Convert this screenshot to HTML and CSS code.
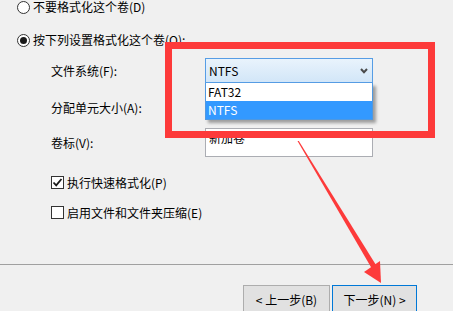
FILE: index.html
```html
<!DOCTYPE html>
<html lang="zh-CN">
<head>
<meta charset="utf-8">
<link rel="stylesheet" href="styles.css">
</head>
<body>
<div class="dialog">
  <div class="content">
    <div class="radio-row">
      <span class="radio"></span><span>不要格式化这个卷(D)</span>
    </div>
    <div class="radio-row second">
      <span class="radio checked"></span><span>按下列设置格式化这个卷(O):</span>
    </div>
    <div class="field fs">
      <span class="label">文件系统(F):</span>
      <div class="select">
        <span>NTFS</span>
        <svg class="chev" width="8" height="6" viewBox="0 0 8 6"><path d="M1 1 L4 4.2 L7 1" fill="none" stroke="#4a4a4a" stroke-width="2"/></svg>
        <div class="list">
          <div class="opt">FAT32</div>
          <div class="opt sel">NTFS</div>
        </div>
      </div>
    </div>
    <div class="field unit">
      <span class="label">分配单元大小(A):</span>
      <div class="select under"></div>
    </div>
    <div class="field vol">
      <span class="label">卷标(V):</span>
      <div class="input">新加卷</div>
    </div>
    <div class="check-row first">
      <span class="checkbox"><svg width="11" height="11" viewBox="0 0 11 11"><path d="M1.5 5.5 L4.2 8.3 L9.5 2" fill="none" stroke="#1a1a1a" stroke-width="1.8"/></svg></span>
      <span>执行快速格式化(P)</span>
    </div>
    <div class="check-row">
      <span class="checkbox"></span>
      <span>启用文件和文件夹压缩(E)</span>
    </div>
  </div>
  <div class="footer">
    <button class="btn back">&lt; 上一步(B)</button>
    <button class="btn next">下一步(N) &gt;</button>
  </div>
</div>
<svg class="annot" width="453" height="311" viewBox="0 0 453 311">
  <rect x="168.5" y="45.5" width="263" height="89" fill="none" stroke="#fd3a3a" stroke-width="7"/>
  <polygon points="297.5,141 298.8,141 376,265 371.5,268" fill="#fd3a3a"/>
  <polygon points="364,272 381,283 380,261" fill="#fd3a3a"/>
</svg>
</body>
</html>
```
FILE: styles.css
```css
html, body {
  margin: 0;
  padding: 0;
}
body {
  width: 453px;
  height: 311px;
  overflow: hidden;
  background: #f0f0f0;
  font-family: "Noto Sans CJK SC", "Noto Sans", sans-serif;
  font-size: 12px;
  color: #000;
  position: relative;
}
.dialog {
  display: flex;
  flex-direction: column;
}
.content {
  padding-left: 17px;
}
.radio-row {
  display: flex;
  align-items: center;
  gap: 3px;
  height: 14px;
  line-height: 14px;
}
.radio-row.second {
  margin-top: 19px;
}
.radio {
  width: 13px;
  height: 13px;
  box-sizing: border-box;
  border: 1px solid #333;
  border-radius: 50%;
  background: #fff;
  display: flex;
  align-items: center;
  justify-content: center;
}
.radio.checked::after {
  content: "";
  width: 7px;
  height: 7px;
  border-radius: 50%;
  background: #1a1a1a;
}
.field {
  display: flex;
  align-items: center;
  margin-left: 34px;
}
.label {
  width: 154px;
  flex: none;
}
.field.fs {
  margin-top: 11px;
  height: 25px;
}
.field.unit {
  margin-top: 12px;
  height: 24px;
}
.field.vol {
  margin-top: 9px;
  height: 29px;
}
.select {
  position: relative;
  width: 168px;
  height: 25px;
  box-sizing: border-box;
  border: 1px solid #569de5;
  background: linear-gradient(#e9f3fc, #d2e6f8);
  display: flex;
  align-items: center;
  justify-content: space-between;
  padding: 0 4px 0 3px;
}
.select.under {
  height: 24px;
  border-color: #adadad;
  background: #e5e5e5;
}
.list {
  position: absolute;
  left: -1px;
  top: 24px;
  width: 168px;
  box-sizing: border-box;
  border: 1px solid #4f98e0;
  border-top: none;
  background: #fff;
  box-shadow: 3px 3px 3px rgba(0, 0, 0, 0.35);
  z-index: 2;
}
.opt {
  height: 18px;
  line-height: 18px;
  padding-left: 2px;
}
.opt.sel {
  background: #3399ff;
  color: #fff;
}
.input {
  width: 168px;
  height: 29px;
  box-sizing: border-box;
  border: 1px solid #abadb3;
  background: #fff;
  padding: 1px 3px 0;
  line-height: 16px;
}
.check-row {
  display: flex;
  align-items: center;
  gap: 3px;
  height: 13px;
  margin-left: 34px;
  margin-top: 17px;
}
.check-row.first {
  margin-top: 19px;
}
.checkbox {
  width: 13px;
  height: 13px;
  box-sizing: border-box;
  border: 1px solid #333;
  background: #fff;
  display: flex;
  align-items: center;
  justify-content: center;
}
.footer {
  margin-top: 45px;
  border-top: 1px solid #a0a0a0;
  padding-top: 20px;
  padding-right: 36px;
  display: flex;
  justify-content: flex-end;
  gap: 2px;
}
.btn {
  height: 28px;
  box-sizing: border-box;
  border: 1px solid #adadad;
  background: #e1e1e1;
  font-family: "Noto Sans CJK SC", "Noto Sans", sans-serif;
  font-size: 12px;
  color: #000;
  padding: 0;
  flex: none;
}
.btn.back {
  width: 87px;
}
.btn.next {
  width: 85px;
  border-color: #0078d7;
}
.annot {
  position: absolute;
  left: 0;
  top: 0;
  pointer-events: none;
}
```
